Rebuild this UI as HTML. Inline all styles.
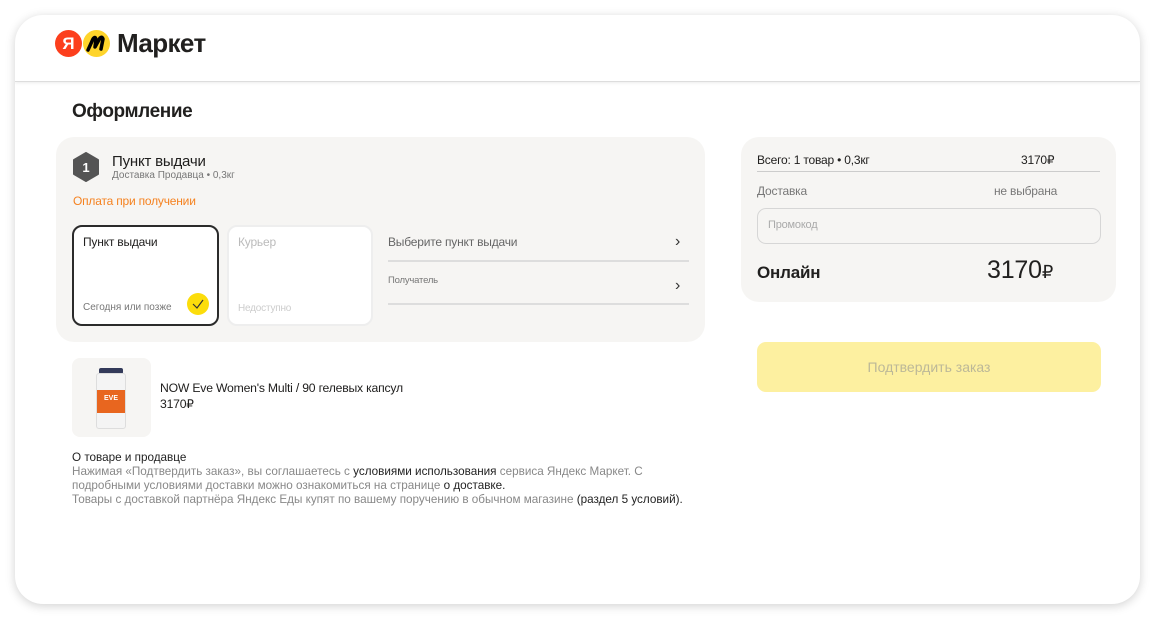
<!DOCTYPE html>
<html><head><meta charset="utf-8"><style>
*{box-sizing:border-box;margin:0;padding:0}
body{width:1155px;height:619px;background:#fff;font-family:"Liberation Sans",sans-serif;color:#21201f;position:relative;overflow:hidden}
.card{position:absolute;left:15px;top:15px;width:1125px;height:589px;background:#fff;border-radius:28px;box-shadow:0 2px 10px rgba(0,0,0,.18);overflow:hidden}
.hdr{position:absolute;left:0;top:0;width:100%;height:67px;border-bottom:1px solid #ddd;box-shadow:0 1px 3px rgba(0,0,0,.08)}
.abs{position:absolute}
.panel{background:#f6f5f3;border-radius:18px}
.t{white-space:nowrap;letter-spacing:-.2px}
</style></head><body>
<div class="card">
 <div class="hdr">
  <div class="abs" style="left:40px;top:15px;width:27px;height:27px;border-radius:50%;background:#fc3f1d;color:#fff;font-weight:bold;font-size:17px;text-align:center;line-height:27px">Я</div>
  <div class="abs" style="left:68px;top:15px;width:27px;height:27px;border-radius:50%;background:#fed42b;overflow:hidden">
   <svg width="27" height="27" viewBox="0 0 27 27"><path d="M5 20 L10 9 Q12 6 13 9 L12 17 L17 8 Q19 6 20 9 L18 19" stroke="#000" stroke-width="3.5" fill="none" stroke-linecap="round" stroke-linejoin="round"/></svg>
  </div>
  <div class="abs t" style="left:102px;top:13px;font-size:26px;font-weight:bold;letter-spacing:-.6px">Маркет</div>
 </div>
 <div class="abs t" style="left:57px;top:86px;font-size:19px;font-weight:bold;letter-spacing:-.4px">Оформление</div>

 <div class="abs panel" style="left:41px;top:122px;width:649px;height:205px">
  <svg class="abs" style="left:16px;top:15px" width="28" height="30" viewBox="0 0 28 30"><path d="M14 1 L26 8 L26 22 L14 29 L2 22 L2 8 Z" fill="#545454" stroke="#545454" stroke-width="2" stroke-linejoin="round"/><text x="14" y="20" fill="#fff" font-size="13" font-weight="bold" text-anchor="middle" font-family="Liberation Sans">1</text></svg>
  <div class="abs t" style="left:56px;top:16px;font-size:15px">Пункт выдачи</div>
  <div class="abs t" style="left:56px;top:33px;font-size:10px;color:#777;letter-spacing:0">Доставка Продавца • 0,3кг</div>
  <div class="abs t" style="left:17px;top:57px;font-size:12px;color:#f58220">Оплата при получении</div>
  <div class="abs" style="left:16px;top:88px;width:147px;height:101px;background:#fff;border:2px solid #2b2b2b;border-radius:10px">
   <div class="abs t" style="left:9px;top:8px;font-size:12px">Пункт выдачи</div>
   <div class="abs t" style="left:9px;top:75px;font-size:10px;color:#777;letter-spacing:0">Сегодня или позже</div>
   <div class="abs" style="left:113px;top:66px;width:22px;height:22px;border-radius:50%;background:#fcdd0b"><svg width="22" height="22"><path d="M6 11 L10 15 L16 7" stroke="#333" stroke-width="1.2" fill="none"/></svg></div>
  </div>
  <div class="abs" style="left:171px;top:88px;width:146px;height:101px;background:#fff;border:2px solid #eee;border-radius:10px">
   <div class="abs t" style="left:9px;top:8px;font-size:12px;color:#bbb">Курьер</div>
   <div class="abs t" style="left:9px;top:76px;font-size:10px;color:#ccc">Недоступно</div>
  </div>
  <div class="abs t" style="left:332px;top:98px;font-size:12px;color:#666">Выберите пункт выдачи</div>
  <div class="abs" style="left:619px;top:96px;font-size:16px;color:#333">›</div>
  <div class="abs" style="left:332px;top:123px;width:301px;height:2px;background:#ddd"></div>
  <div class="abs t" style="left:332px;top:138px;font-size:9.5px;color:#777">Получатель</div>
  <div class="abs" style="left:619px;top:140px;font-size:16px;color:#333">›</div>
  <div class="abs" style="left:332px;top:166px;width:301px;height:2px;background:#ddd"></div>
 </div>

 <div class="abs" style="left:57px;top:343px;width:79px;height:79px;background:#f6f5f3;border-radius:8px">
  <div class="abs" style="left:27px;top:10px;width:24px;height:6px;background:#333a5a;border-radius:2px"></div>
  <div class="abs" style="left:24px;top:15px;width:30px;height:56px;background:#f4f4f4;border-radius:3px;border:1px solid #ddd"></div>
  <div class="abs" style="left:25px;top:32px;width:28px;height:23px;background:#e8661f"></div>
  <div class="abs" style="left:32px;top:37px;font-size:7px;color:#fff;font-weight:bold">EVE</div>
 </div>
 <div class="abs t" style="left:145px;top:366px;font-size:12.2px">NOW Eve Women's Multi / 90 гелевых капсул</div>
 <div class="abs t" style="left:145px;top:382px;font-size:12.2px">3170₽</div>

 <div class="abs" style="left:57px;top:436px;font-size:11.7px;line-height:14px;color:#888;letter-spacing:0;width:660px;white-space:nowrap">
  <span style="color:#222">О товаре и продавце</span><br>
  Нажимая «Подтвердить заказ», вы соглашаетесь с <span style="color:#222">условиями использования</span> сервиса Яндекс Маркет. С<br>
  подробными условиями доставки можно ознакомиться на странице <span style="color:#222">о доставке.</span><br>
  Товары с доставкой партнёра Яндекс Еды купят по вашему поручению в обычном магазине <span style="color:#222">(раздел 5 условий).</span>
 </div>

 <div class="abs panel" style="left:726px;top:122px;width:375px;height:165px">
  <div class="abs t" style="left:16px;top:16px;font-size:12px">Всего: 1 товар • 0,3кг</div>
  <div class="abs t" style="left:280px;top:16px;font-size:12px">3170₽</div>
  <div class="abs" style="left:16px;top:34px;width:343px;height:1px;background:#ccc"></div>
  <div class="abs t" style="left:16px;top:47px;font-size:12px;color:#777">Доставка</div>
  <div class="abs t" style="left:253px;top:47px;font-size:12px;color:#777">не выбрана</div>
  <div class="abs" style="left:16px;top:71px;width:344px;height:36px;border:1px solid #d6d6d6;border-radius:9px">
   <div class="abs t" style="left:10px;top:10px;font-size:11px;color:#aaa">Промокод</div>
  </div>
  <div class="abs t" style="left:16px;top:126px;font-size:17px;font-weight:bold">Онлайн</div>
  <div class="abs t" style="left:246px;top:119px;font-size:25px">3170<span style="font-size:18px">₽</span></div>
 </div>
 <div class="abs" style="left:742px;top:327px;width:344px;height:50px;background:#fdf0a0;border-radius:9px;text-align:center;line-height:50px;font-size:14px;color:#bcb898">Подтвердить заказ</div>
</div>
</body></html>
